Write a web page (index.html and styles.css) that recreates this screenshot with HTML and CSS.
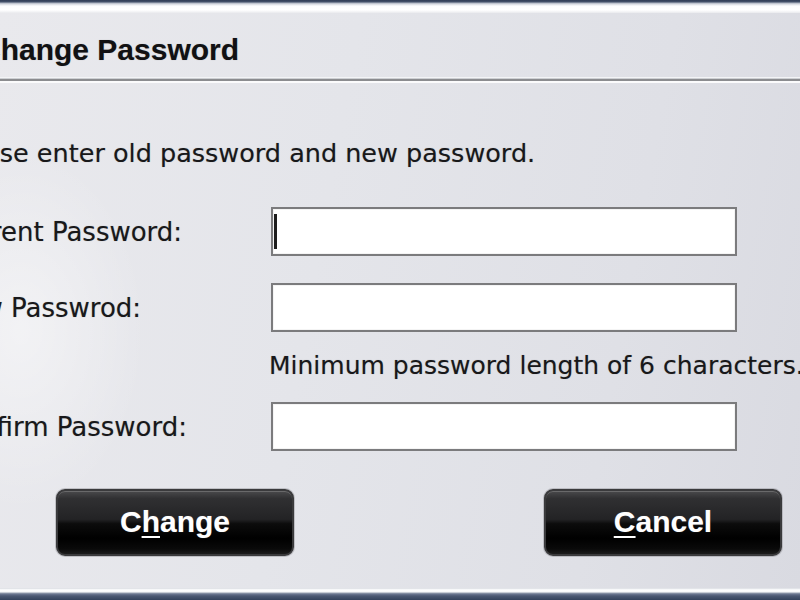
FILE: index.html
```html
<!DOCTYPE html>
<html lang="en">
<head>
<meta charset="utf-8">
<title>Change Password</title>
<link rel="stylesheet" href="styles.css">
</head>
<body>
  <div class="edge-top"></div>
  <h1 class="title">Change Password</h1>
  <div class="rule"></div>
  <div class="content">
    <p class="intro">Please enter old password and new password.</p>
    <div class="row row-first">
      <span class="label">Current Password:</span>
      <div class="field"><span class="caret"></span></div>
    </div>
    <div class="row row-second">
      <span class="label">New Passwrod:</span>
      <div class="field"></div>
    </div>
    <p class="hint">Minimum password length of 6 characters.</p>
    <div class="row row-third">
      <span class="label">Confirm Password:</span>
      <div class="field"></div>
    </div>
  </div>
  <div class="buttons">
    <button class="btn" type="button">C<u>h</u>ange</button>
    <button class="btn" type="button"><u>C</u>ancel</button>
  </div>
  <div class="edge-bottom"></div>
</body>
</html>
```
FILE: styles.css
```css
html, body {
  margin: 0;
  padding: 0;
}

body {
  width: 800px;
  height: 600px;
  overflow: hidden;
  display: flex;
  flex-direction: column;
  color: #18181a;
  font-family: "DejaVu Sans", "Liberation Sans", sans-serif;
  text-shadow: 0 0 1px rgba(0, 0, 0, 0.3);
  background:
    radial-gradient(ellipse 180px 260px at 20px 330px, rgba(255,255,255,0.45), rgba(255,255,255,0) 70%),
    linear-gradient(100deg, #e9e9ed 0%, #e4e5ea 40%, #dfe0e6 75%, #d9dae1 100%);
}

.edge-top {
  flex: none;
  height: 13px;
  background: linear-gradient(180deg,
    #2f3c55 0px, #46536c 2px, #aab1bf 3px, #d6d9e0 4px,
    #fdfdfe 6px, #ffffff 10px, #f1f2f4 12px, #e9e9ed 13px);
}

.title {
  margin: 19px 0 0 -21px;
  font-family: "Liberation Sans", Arial, sans-serif;
  font-weight: bold;
  font-size: 30px;
  line-height: 36px;
  color: #111113;
  white-space: nowrap;
}

.rule {
  flex: none;
  margin-top: 9px;
  height: 6px;
  background: linear-gradient(180deg,
    #f3f4f6 0px, #f3f4f6 1px,
    #cdcfd3 1px, #cdcfd3 2px,
    #8b8c8f 2px, #8b8c8f 4px,
    #fbfbfc 4px, #fbfbfc 6px);
}

.content {
  margin-left: -51px;
  display: flex;
  flex-direction: column;
}

.intro {
  margin: 55px 0 0 -3px;
  font-size: 25.5px;
  line-height: 30px;
  white-space: nowrap;
}

.row {
  display: flex;
  align-items: center;
  height: 49px;
}

.row-first { margin-top: 39px; }
.row-second { margin-top: 27px; }
.row-third { margin-top: 21px; }

.label {
  flex: none;
  width: 325px;
  margin-left: -3px;
  font-size: 26px;
  line-height: 30px;
  white-space: nowrap;
}

.field {
  flex: none;
  box-sizing: border-box;
  width: 466px;
  height: 49px;
  background: #ffffff;
  border: 2px solid #7b7b7d;
  box-shadow: inset 0 0 0 1px #f4f4f4;
  display: flex;
  align-items: center;
}

.caret {
  display: block;
  width: 3px;
  height: 35px;
  margin-left: 1px;
  background: #1e1e1e;
}

.hint {
  margin: 19px 0 0 320px;
  font-size: 25px;
  line-height: 30px;
  white-space: nowrap;
}

.buttons {
  flex: none;
  margin-top: 38px;
  padding: 0 18px 0 56px;
  display: flex;
  justify-content: space-between;
}

.btn {
  box-sizing: border-box;
  width: 238px;
  height: 67px;
  padding: 0 0 2px 0;
  border: 2px solid #3a3a3c;
  border-radius: 9px;
  background: linear-gradient(180deg,
    #4a4a4c 0%, #303032 12%, #232325 45%, #0c0c0c 52%, #000000 75%, #0a0a0a 92%, #1c1c1c 100%);
  box-shadow: inset 0 1px 0 rgba(255,255,255,0.18), 0 0 0 1px rgba(120,120,125,0.35);
  color: #ffffff;
  font-family: "Liberation Sans", Arial, sans-serif;
  font-weight: bold;
  font-size: 30px;
  line-height: 36px;
  text-shadow: 0 0 1px rgba(255,255,255,0.35);
  cursor: default;
}

.btn u {
  text-decoration-thickness: 2px;
  text-underline-offset: 4px;
}

.edge-bottom {
  flex: none;
  margin-top: auto;
  height: 12px;
  background: linear-gradient(180deg,
    #d6d8de 0px, #eef0f3 1px, #ffffff 2px, #f6f7f9 4px,
    #9aa3b2 5px, #6a7690 6px, #4b5872 8px, #34425c 12px);
}
```
